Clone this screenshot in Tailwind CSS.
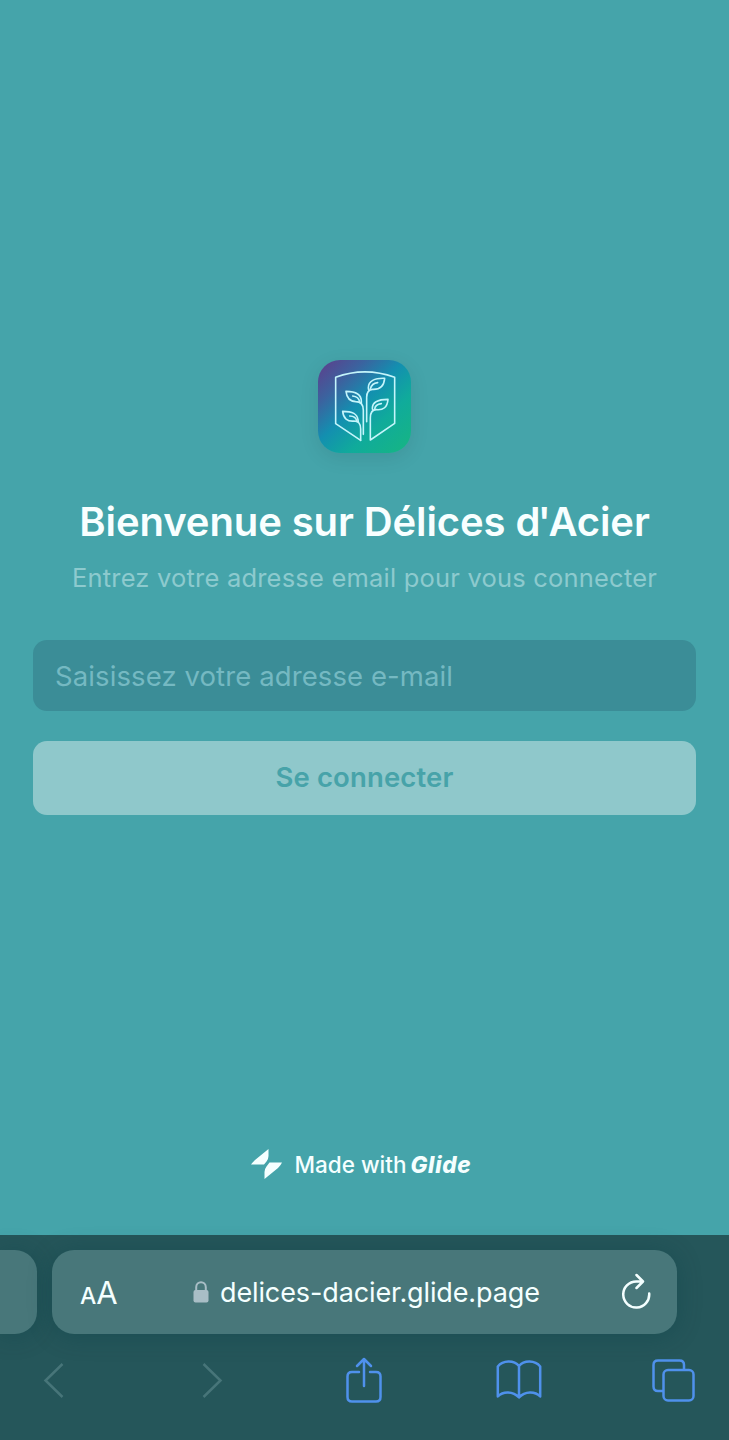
<!DOCTYPE html>
<html lang="fr">
<head>
<meta charset="utf-8">
<title>Délices d'Acier</title>
<script src="https://cdn.jsdelivr.net/npm/@tailwindcss/browser@4"></script>
</head>
<body class="w-[729px] h-[1440px] overflow-hidden bg-[#45a4aa] font-['Inter',sans-serif] flex flex-col">
  <main class="h-[1235px] flex flex-col items-center px-[33px] pt-[360px]">
    <div class="size-[93px] shrink-0 rounded-[22px] shadow-[0_5px_20px_rgba(0,0,0,0.09)]">
      <svg class="size-full" viewBox="54 45 279 279" fill="none">
        <defs>
          <linearGradient id="g" x1="72" y1="58" x2="305" y2="305" gradientUnits="userSpaceOnUse">
            <stop offset="0" stop-color="#57458f"/><stop offset=".22" stop-color="#3b639f"/><stop offset=".46" stop-color="#138fb0"/><stop offset=".72" stop-color="#10ab9b"/><stop offset="1" stop-color="#15b388"/>
          </linearGradient>
        </defs>
        <rect x="54" y="45" width="279" height="279" rx="66" fill="url(#g)"/>
        <g stroke="#c4f5fb" stroke-width="4.8" stroke-linejoin="round" stroke-linecap="round">
          <path d="M182 286 L107 236 V97 Q194 64 284 97 V235 L211 285 V219 C211 203 217 194 229 194 C250 196 262 187 264 163 C235 163 217 169 217 190 Q217 193 219 196"/>
          <path d="M182 286 V252 C182 235 175 228 162 228 C142 230 130 220 128 199 C158 199 172 206 174 225 L175 231"/>
          <path d="M190 268 V196 C190 179 184 170 167 170 C150 169 140 158 138 139 C168 139 184 149 184 169 L184 174"/>
          <path d="M200 230 V157 C200 141 205 134 218 133 C240 134 252 123 254 100 C224 99 205 108 205 128 Q205 133 207 137"/>
          <path d="M211 132 C214 119 223 114 233 113 M179 171 C177 159 168 154 158 153 M224 193 C225 182 234 177 244 176 M170 229 C169 219 160 213 149 213"/>
        </g>
      </svg>
    </div>
    <h1 class="mt-[45px] h-12 leading-[48px] text-[40px] font-semibold text-[#f8ffff] whitespace-nowrap tracking-[-0.1px]">Bienvenue sur Délices <span class="tracking-[-2.5px]">d'</span>Acier</h1>
    <p class="mt-[16px] h-8 leading-8 text-[25.5px] text-[#8dcace] whitespace-nowrap tracking-[0.2px]">Entrez votre adresse email pour vous connecter</p>
    <div class="mt-[46px] w-full h-[71px] shrink-0 rounded-[14px] bg-[#3b8d97] flex items-center pl-[22px] text-[27.5px] text-[#75b9c2] whitespace-nowrap tracking-[0.1px]"><span class="pt-[2px]">Saisissez votre adresse e-mail</span></div>
    <button class="mt-[30px] w-full h-[74px] shrink-0 rounded-[14px] bg-[#8fc8cb] text-[27.5px] font-semibold text-[#47a3a9] tracking-[0.15px]"><span>Se connecter</span></button>
    <div class="mt-[333px] h-8 w-[221px] flex items-center text-[#f5ffff] mr-[7px]">
      <svg class="w-[31px] h-8 shrink-0" viewBox="0 0 31 32" fill="currentColor"><path d="M0 16.5 Q1 15 4 12 L17.5 1 V8 Q17.500 11 15.500 13.500 L13 16.500 Z M31 14.500 Q30 17 27 20 L13.500 31 V24 Q13.500 21 15.500 18.500 L18.500 14.500 Z"/></svg>
      <span class="ml-[13px] pt-px text-[22.5px] font-medium whitespace-nowrap">Made with</span>
      <span class="ml-[4px] pt-px text-[22.500px] font-extrabold italic whitespace-nowrap tracking-[0.7px]">Glide</span>
    </div>
  </main>
  <footer class="h-[205px] bg-[#25565a] flex flex-col">
    <div class="pt-[15px] flex gap-[15px]">
      <div class="w-[37px] h-[84px] rounded-r-[22px] bg-[#48777a] shadow-[0_2px_24px_rgba(0,60,65,0.3)]"></div>
      <div class="w-[625px] h-[84px] rounded-[22px] bg-[#48777a] shadow-[0_2px_24px_rgba(0,60,65,0.3)] flex items-center text-[#f4ffff]">
        <div class="ml-[28px] w-[113px] pt-px flex items-baseline leading-none whitespace-nowrap"><span class="text-[23px] font-medium">A</span><span class="text-[31px]">A</span></div>
        <svg class="w-4 h-[22px] shrink-0" viewBox="0 0 16 22"><path d="M3.200 10 V6.200 C3.200 -.5 12.800 -.5 12.800 6.200 V10" fill="none" stroke="#a9bec6" stroke-width="2"/><rect x=".5" y="9" width="15" height="12.500" rx="2" fill="#a9bec6"/></svg>
        <span class="ml-[11px] pt-[2px] w-[402px] text-[27px] whitespace-nowrap tracking-[-0.12px]">delices-dacier.glide.page</span>
        <svg class="mb-[2px] w-[29px] h-[36px] shrink-0" viewBox="0 0 29 36" fill="none" stroke="currentColor" stroke-width="2.500" stroke-linecap="round" stroke-linejoin="round"><path d="M27.200 20.500 A13 13 0 1 1 14.200 8.500 H20 M14.500 2 L21 8.500 L14.500 15"/></svg>
      </div>
    </div>
    <nav class="mt-[22px] h-[48px] pl-[43px] flex items-center text-[#4f91ec]">
      <svg class="w-[21px] h-9 shrink-0" viewBox="0 0 21 36" fill="none" stroke="#477579" stroke-width="2.500"><path d="M19.500 2 L2.500 18.500 L19.500 35"/></svg>
      <svg class="ml-[138px] w-[21px] h-9 shrink-0" viewBox="0 0 21 36" fill="none" stroke="#477579" stroke-width="2.500"><path d="M1.500 2 L18.500 18.500 L1.500 35"/></svg>
      <svg class="ml-[123px] w-9 h-[46px] shrink-0" viewBox="0 0 36 46" fill="none" stroke="currentColor" stroke-width="2.500" stroke-linecap="round" stroke-linejoin="round"><path d="M13 15 H6 Q1.500 15 1.500 19.500 V40 Q1.500 44.500 6 44.500 H30 Q34.500 44.500 34.500 40 V19.500 Q34.500 15 30 15 H24 M18 29 V2 M11 9 L18 2 L25 9"/></svg>
      <svg class="ml-[114px] w-[46px] h-[40px] shrink-0" viewBox="0 0 46 40" fill="none" stroke="currentColor" stroke-width="2.500" stroke-linejoin="round"><path d="M23 6 C18 0 7 0 1.800 6.500 V36.500 C7 31 17 31 23 37.500 C29 31 39 31 44.200 36.500 V6.500 C39 0 28 0 23 6 Z V37"/></svg>
      <svg class="ml-[110px] w-[43px] h-[43px] shrink-0" viewBox="0 0 43 43" fill="none" stroke="currentColor" stroke-width="2.500"><rect x="11.500" y="11" width="30" height="30.500" rx="4.500"/><path d="M32 11 V6 Q32 1.500 27.500 1.500 H6 Q1.500 1.500 1.500 6 V27.500 Q1.500 32 6 32 H11.500"/></svg>
    </nav>
  </footer>
</body>
</html>
